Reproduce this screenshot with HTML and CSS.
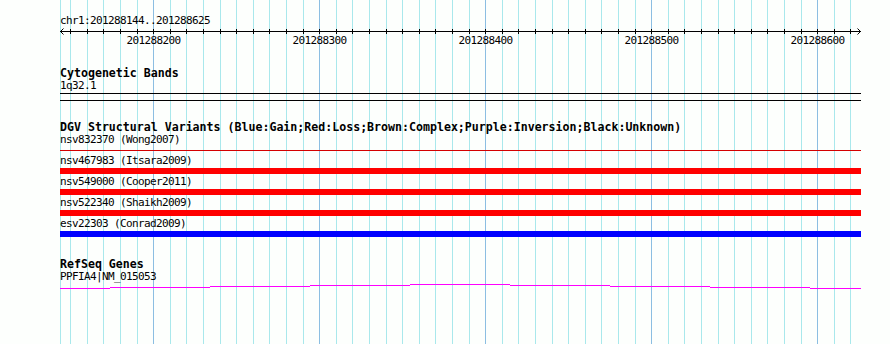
FILE: index.html
```html
<!DOCTYPE html>
<html lang="en">
<head>
    <meta charset="UTF-8">
    <title>chr1:201288144..201288625</title>
    <link rel="stylesheet" href="styles.css">
</head>
<body>
    <div class="view">
        <!-- 10bp grid, darker every 100bp -->
        <svg class="grid" width="890" height="344">
            <path class="grid-minor" d="M60.5 0V344M70.5 0V344M87.5 0V344M103.5 0V344M120.5 0V344M137.5 0V344M170.5 0V344M186.5 0V344M203.5 0V344M220.5 0V344M236.5 0V344M253.5 0V344M269.5 0V344M286.5 0V344M303.5 0V344M336.5 0V344M352.5 0V344M369.5 0V344M386.5 0V344M402.5 0V344M419.5 0V344M435.5 0V344M452.5 0V344M469.5 0V344M502.5 0V344M518.5 0V344M535.5 0V344M552.5 0V344M568.5 0V344M585.5 0V344M601.5 0V344M618.5 0V344M635.5 0V344M668.5 0V344M684.5 0V344M701.5 0V344M718.5 0V344M734.5 0V344M751.5 0V344M767.5 0V344M784.5 0V344M801.5 0V344M834.5 0V344M850.5 0V344"/>
            <path class="grid-major" d="M153.5 0V344M319.5 0V344M485.5 0V344M651.5 0V344M817.5 0V344"/>
        </svg>

        <div class="tracks">
            <div class="locus">chr1:201288144..201288625</div>

            <svg class="ruler" width="801" height="20">
                <path class="axis" d="M0 4.5H801"/>
                <path class="arrow" d="M3.5 1.5L0.5 4.5L3.5 7.5M797.5 1.5L800.5 4.5L797.5 7.5"/>
                <path class="ticks" d="M10.5 2V7M27.5 2V7M43.5 2V7M60.5 2V7M77.5 2V7M93.5 2V7M110.5 2V7M126.5 2V7M143.5 2V7M160.5 2V7M176.5 2V7M193.5 2V7M209.5 2V7M226.5 2V7M243.5 2V7M259.5 2V7M276.5 2V7M292.5 2V7M309.5 2V7M326.5 2V7M342.5 2V7M359.5 2V7M375.5 2V7M392.5 2V7M409.5 2V7M425.5 2V7M442.5 2V7M458.5 2V7M475.5 2V7M492.5 2V7M508.5 2V7M525.5 2V7M541.5 2V7M558.5 2V7M575.5 2V7M591.5 2V7M608.5 2V7M624.5 2V7M641.5 2V7M658.5 2V7M674.5 2V7M691.5 2V7M707.5 2V7M724.5 2V7M741.5 2V7M757.5 2V7M774.5 2V7M790.5 2V7"/>
                <text x="93.5" y="17">201288200</text>
                <text x="259.5" y="17">201288300</text>
                <text x="425.5" y="17">201288400</text>
                <text x="591.5" y="17">201288500</text>
                <text x="757.5" y="17">201288600</text>
            </svg>

            <div class="track">
                <div class="title">Cytogenetic Bands</div>
                <div class="label sub">1q32.1</div>
                <div class="band"></div>
            </div>

            <div class="track">
                <div class="title">DGV Structural Variants (Blue:Gain;Red:Loss;Brown:Complex;Purple:Inversion;Black:Unknown)</div>
                <div class="variant">
                    <div class="label row">nsv832370 (Wong2007)</div>
                    <div class="slot single"><div class="thin"></div></div>
                </div>
                <div class="variant">
                    <div class="label row">nsv467983 (Itsara2009)</div>
                    <div class="slot loss"></div>
                </div>
                <div class="variant">
                    <div class="label row">nsv549000 (Cooper2011)</div>
                    <div class="slot loss"></div>
                </div>
                <div class="variant">
                    <div class="label row">nsv522340 (Shaikh2009)</div>
                    <div class="slot loss"></div>
                </div>
                <div class="variant">
                    <div class="label row">esv22303 (Conrad2009)</div>
                    <div class="slot gain"></div>
                </div>
            </div>

            <div class="track genes">
                <div class="title">RefSeq Genes</div>
                <div class="label sub">PPFIA4|NM_015053</div>
                <svg class="gene" width="801" height="10">
                    <rect x="0" y="6" width="50" height="1"/>
                    <rect x="50" y="5" width="100" height="1"/>
                    <rect x="150" y="4" width="100" height="1"/>
                    <rect x="250" y="3" width="100" height="1"/>
                    <rect x="350" y="2" width="100" height="1"/>
                    <rect x="450" y="3" width="100" height="1"/>
                    <rect x="550" y="4" width="100" height="1"/>
                    <rect x="650" y="5" width="100" height="1"/>
                    <rect x="750" y="6" width="51" height="1"/>
                </svg>
            </div>
        </div>
    </div>
</body>
</html>
```

FILE: styles.css
```css
body {
    margin: 0;
    background: #fdfffd;
    font-family: "DejaVu Sans Mono", monospace;
    color: #000;
}
.view {
    position: relative;
    width: 890px;
    height: 344px;
    overflow: hidden;
}
.grid {
    position: absolute;
    top: 0;
    left: 0;
}
.grid-minor {
    stroke: #a9e8ec;
    stroke-width: 1;
    shape-rendering: crispEdges;
}
.grid-major {
    stroke: #8cbee2;
    stroke-width: 1;
    shape-rendering: crispEdges;
}
.tracks {
    position: relative;
    width: 801px;
    padding: 15px 0 0 60px;
}
.locus, .label {
    font-size: 11px;
    letter-spacing: -0.62px;
    height: 12px;
    line-height: 12px;
    white-space: nowrap;
}
.ruler {
    display: block;
}
.ruler .axis, .ruler .ticks {
    stroke: #000;
    stroke-width: 1;
    shape-rendering: crispEdges;
}
.ruler .arrow {
    stroke: #000;
    stroke-width: 1;
    fill: none;
}
.ruler text {
    font-family: "DejaVu Sans Mono", monospace;
    font-size: 11px;
    letter-spacing: -0.62px;
    text-anchor: middle;
}
.track {
    margin-top: 22px;
}
.track.genes {
    margin-top: 23px;
}
.title {
    font-size: 11.6px;
    font-weight: bold;
    height: 9px;
    line-height: 9px;
    white-space: nowrap;
}
.label.sub {
    margin-top: 1.5px;
    height: 10.5px;
}
.band {
    margin-top: 3px;
    height: 6px;
    border-top: 1px solid #000;
    border-bottom: 1px solid #000;
}
.label.row {
    height: 15px;
    line-height: 15px;
}
.slot {
    height: 6px;
    box-sizing: border-box;
}
.slot.single {
    padding-top: 3px;
}
.slot .thin {
    height: 1px;
    background: #d40000;
}
.loss {
    background: #ff0000;
}
.gain {
    background: #0000ff;
}
.gene {
    display: block;
    margin-top: 1px;
    fill: #ff00ff;
    shape-rendering: crispEdges;
}
```
